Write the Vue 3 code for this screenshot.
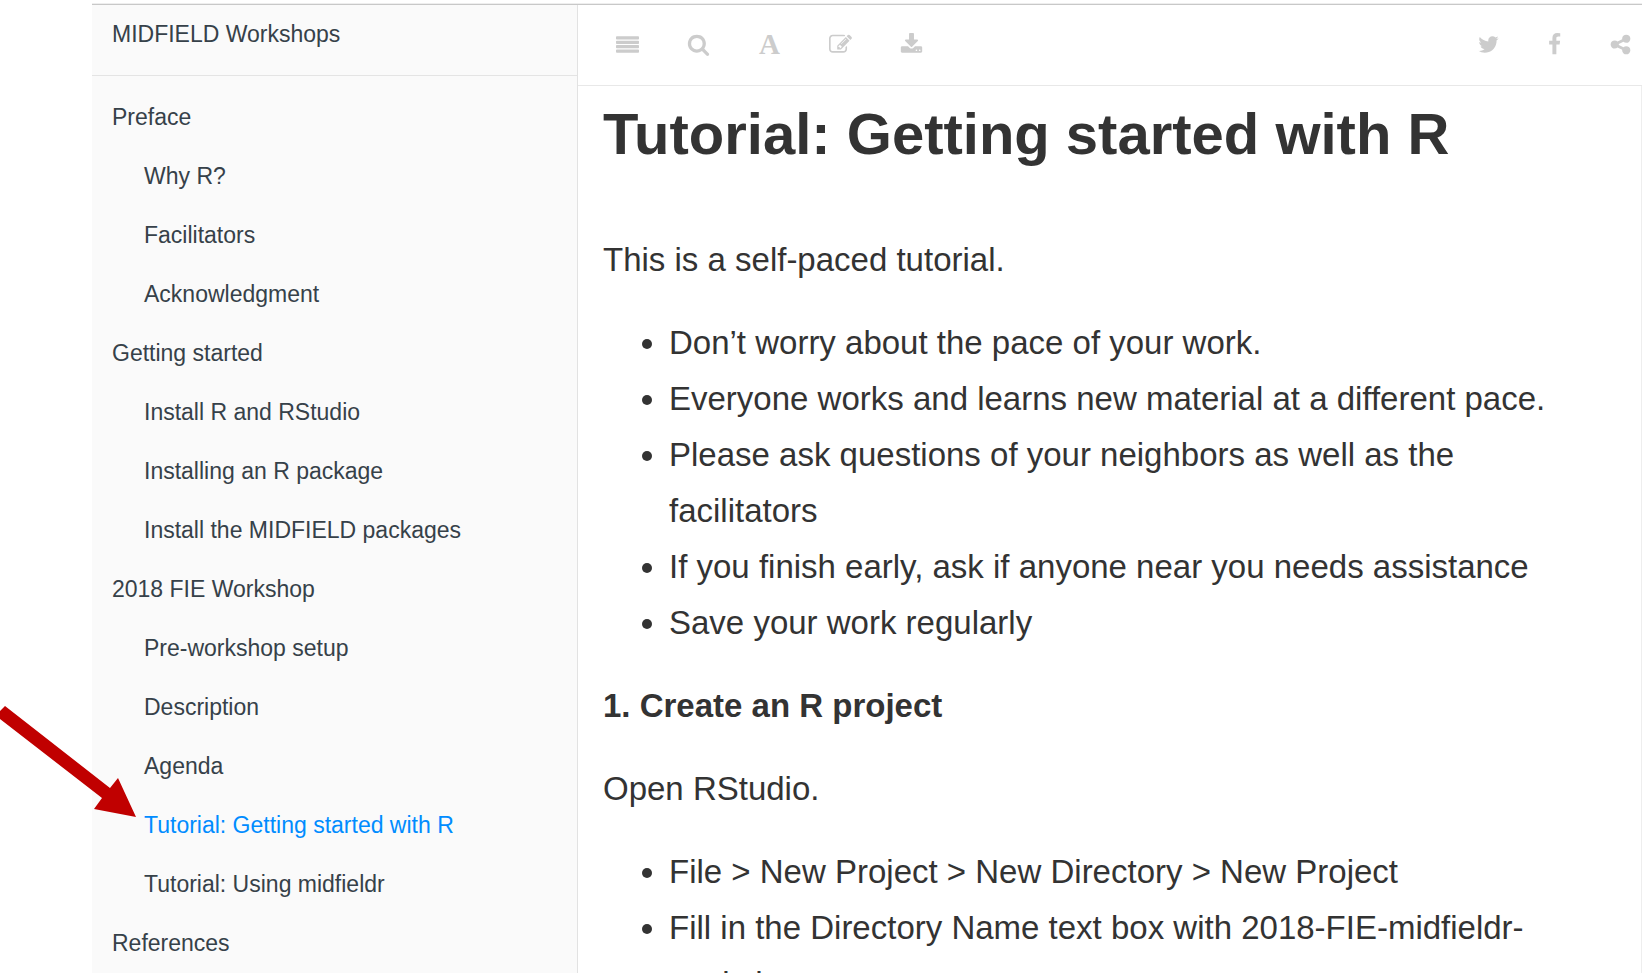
<script setup>
const chapters = [
  {
    title: 'Preface',
    sections: ['Why R?', 'Facilitators', 'Acknowledgment'],
  },
  {
    title: 'Getting started',
    sections: ['Install R and RStudio', 'Installing an R package', 'Install the MIDFIELD packages'],
  },
  {
    title: '2018 FIE Workshop',
    sections: [
      'Pre-workshop setup',
      'Description',
      'Agenda',
      'Tutorial: Getting started with R',
      'Tutorial: Using midfieldr',
    ],
  },
  { title: 'References', sections: [] },
]
const current = 'Tutorial: Getting started with R'

const tools = [
  {
    label: 'Toggle sidebar',
    path: 'M64 256h1664q64 0 64 64v128q0 64-64 64h-1664q-64 0-64-64v-128q0-64 64-64zM64 597h1664q64 0 64 64v128q0 64-64 64h-1664q-64 0-64-64v-128q0-64 64-64zM64 939h1664q64 0 64 64v128q0 64-64 64h-1664q-64 0-64-64v-128q0-64 64-64zM64 1280h1664q64 0 64 64v128q0 64-64 64h-1664q-64 0-64-64v-128q0-64 64-64z',
  },
  {
    label: 'Search',
    path: 'M1216 832q0-185-131.5-316.5t-316.5-131.5-316.5 131.5-131.5 316.5 131.5 316.5 316.5 131.5 316.5-131.5 131.5-316.5zm512 832q0 52-38 90t-90 38q-54 0-90-38l-343-342q-179 124-399 124-143 0-273.5-55.5t-225-150-150-225-55.5-273.5 55.5-273.5 150-225 225-150 273.5-55.5 273.5 55.5 225 150 150 225 55.5 273.5q0 220-124 399l343 343q37 37 37 90z',
  },
  { label: 'Font settings', text: 'A' },
  {
    label: 'Edit',
    path: 'M888 1184l116-116-152-152-116 116v56h96v96h56zm440-720q-16-16-33 1l-350 350q-17 17-1 33t33-1l350-350q17-17 1-33zm80 594v190q0 119-84.5 203.5t-203.5 84.5h-832q-119 0-203.5-84.5t-84.5-203.5v-832q0-119 84.5-203.5t203.5-84.5h832q63 0 117 25 15 7 18 23 3 17-9 29l-49 49q-14 14-32 8-23-6-45-6h-832q-66 0-113 47t-47 113v832q0 66 47 113t113 47h832q66 0 113-47t47-113v-126q0-13 9-22l64-64q15-15 35-7t20 29zm-96-738l288 288-672 672h-288v-288zm444 132l-92 92-288-288 92-92q28-28 68-28t68 28l152 152q28 28 28 68t-28 68z',
  },
  {
    label: 'Download',
    path: 'M1344 1344q0-26-19-45t-45-19-45 19-19 45 19 45 45 19 45-19 19-45zm256 0q0-26-19-45t-45-19-45 19-19 45 19 45 45 19 45-19 19-45zm128-224v320q0 40-28 68t-68 28h-1472q-40 0-68-28t-28-68v-320q0-40 28-68t68-28h465l135 136q58 56 136 56t136-56l136-136h464q40 0 68 28t28 68zm-325-569q17 41-14 70l-448 448q-18 19-45 19t-45-19l-448-448q-31-29-14-70 17-39 59-39h256v-448q0-26 19-45t45-19h256q26 0 45 19t19 45v448h256q42 0 59 39z',
  },
]

const shares = [
  {
    label: 'Twitter',
    path: 'M1684 408q-67 98-162 167 1 14 1 42 0 130-38 259.5t-115.5 248.5-184.5 210.5-258 146-323 54.5q-271 0-496-145 35 4 78 4 225 0 401-138-105-2-188-64.5t-114-159.5q33 5 61 5 43 0 85-11-112-23-185.5-111.5t-73.5-205.5v-4q68 38 146 41-66-44-105-115t-39-154q0-88 44-163 121 149 294.5 238.5t371.5 99.5q-8-38-8-74 0-134 94.5-228.5t228.5-94.5q140 0 236 102 109-21 205-78-37 115-142 178 93-10 186-50z',
  },
  {
    label: 'Facebook',
    path: 'M1343 12v264h-157q-86 0-116 36t-30 108v189h293l-39 296h-254v759h-306v-759h-255v-296h255v-218q0-186 104-288.5t277-102.5q147 0 228 12z',
  },
  {
    label: 'Share',
    path: 'M1344 1024q133 0 226.5 93.5t93.5 226.5-93.5 226.5-226.5 93.5-226.5-93.5-93.5-226.5q0-12 2-34l-360-180q-92 86-218 86-133 0-226.5-93.5t-93.5-226.5 93.5-226.5 226.5-93.5q126 0 218 86l360-180q-2-22-2-34 0-133 93.5-226.5t226.5-93.5 226.5 93.5 93.5 226.5-93.5 226.5-226.5 93.5q-126 0-218-86l-360 180q2 22 2 34t-2 34l360 180q92-86 218-86z',
  },
]
</script>

<template>
  <div class="page">
    <div class="book">
      <nav class="sidebar" aria-label="Contents">
        <a class="book-title" href="#">MIDFIELD Workshops</a>
        <ul class="chapters">
          <li v-for="chapter in chapters" :key="chapter.title">
            <a class="entry" href="#">{{ chapter.title }}</a>
            <ul v-if="chapter.sections.length" class="sections">
              <li v-for="section in chapter.sections" :key="section">
                <a
                  class="entry"
                  :class="{ active: section === current }"
                  :aria-current="section === current ? 'page' : null"
                  href="#"
                >{{ section }}</a>
              </li>
            </ul>
          </li>
        </ul>
      </nav>

      <div class="main">
        <header class="toolbar">
          <div class="tools">
            <button v-for="tool in tools" :key="tool.label" type="button" class="tool" :aria-label="tool.label">
              <svg v-if="tool.path" class="icon" viewBox="0 0 1792 1792" aria-hidden="true"><path :d="tool.path" /></svg>
              <span v-else class="letter">{{ tool.text }}</span>
            </button>
          </div>
          <div class="shares">
            <button v-for="share in shares" :key="share.label" type="button" class="tool" :aria-label="share.label">
              <svg class="icon" viewBox="0 0 1792 1792" aria-hidden="true"><path :d="share.path" /></svg>
            </button>
          </div>
        </header>

        <main class="content">
          <h1>Tutorial: Getting started with R</h1>
          <p>This is a self-paced tutorial.</p>
          <ul>
            <li>Don’t worry about the pace of your work.</li>
            <li>Everyone works and learns new material at a different pace.</li>
            <li>Please ask questions of your neighbors as well as the facilitators</li>
            <li>If you finish early, ask if anyone near you needs assistance</li>
            <li>Save your work regularly</li>
          </ul>
          <h2>1. Create an R project</h2>
          <p>Open RStudio.</p>
          <ul>
            <li>File &gt; New Project &gt; New Directory &gt; New Project</li>
            <li>Fill in the Directory Name text box with 2018-FIE-midfieldr-workshop</li>
          </ul>
        </main>
      </div>
    </div>

    <svg class="pointer" viewBox="0 0 140 120" aria-hidden="true">
      <polygon points="0,11 5,6 110,88 118,78 136,117 94,109 102,98 0,19" />
    </svg>
  </div>
</template>

<style>
body {
  margin: 0;
  background: #fff;
}
</style>

<style scoped>
.page {
  position: relative;
  box-sizing: border-box;
  height: 100vh;
  padding: 4px 9px 0 92px;
  overflow: hidden;
  font-family: "Liberation Sans", Arial, sans-serif;
}

ul {
  margin: 0;
  padding: 0;
}

.book {
  display: flex;
  height: 100%;
  border-top: 1px solid #c8c8c8;
  box-shadow: 0 -1px #eee;
}

.sidebar {
  box-sizing: border-box;
  flex: 0 0 486px;
  border-right: 1px solid #e2e2e2;
  background: #fafafa;
}

.book-title,
.entry {
  display: block;
  padding-left: 20px;
  color: #364149;
  font-size: 23px;
  text-decoration: none;
}

.book-title {
  height: 70px;
  border-bottom: 1px solid #e4e4e4;
  line-height: 58px;
}

.chapters {
  padding-top: 12px;
  list-style: none;
}

.sections {
  padding-left: 32px;
  list-style: none;
}

.entry {
  line-height: 59px;
}

.entry.active {
  color: #008cff;
}

.main {
  display: flex;
  flex: 1;
  flex-direction: column;
  min-width: 0;
}

.toolbar {
  display: flex;
  justify-content: space-between;
  align-items: center;
  height: 78px;
  padding: 0 10px 2px 38px;
  border-bottom: 1px solid #e8e8e8;
}

.tools,
.shares {
  display: flex;
}

.tools {
  gap: 48px;
}

.shares {
  gap: 43px;
}

.tool {
  display: flex;
  justify-content: center;
  align-items: center;
  width: 23px;
  height: 23px;
  padding: 0;
  border: 0;
  background: none;
  color: #ccc;
}

.icon {
  width: 23px;
  height: 23px;
  fill: currentColor;
}

.letter {
  font: bold 29px/23px "Liberation Serif", serif;
}

.content {
  flex: 1;
  min-height: 0;
  padding: 12px 45px 0 25px;
  border-right: 1px solid #eee;
  color: #333;
  font-size: 33px;
  line-height: 56px;
}

h1 {
  margin: 0 0 62px;
  font-size: 58px;
  line-height: 72px;
}

h2 {
  margin: 0 0 27px;
  font-size: 33px;
  line-height: 56px;
}

.content p {
  margin: 0 0 27px;
}

.content ul {
  margin-bottom: 27px;
  padding-left: 66px;
}

.pointer {
  position: absolute;
  top: 700px;
  left: 0;
  width: 140px;
  height: 120px;
  fill: #c00000;
}
</style>
